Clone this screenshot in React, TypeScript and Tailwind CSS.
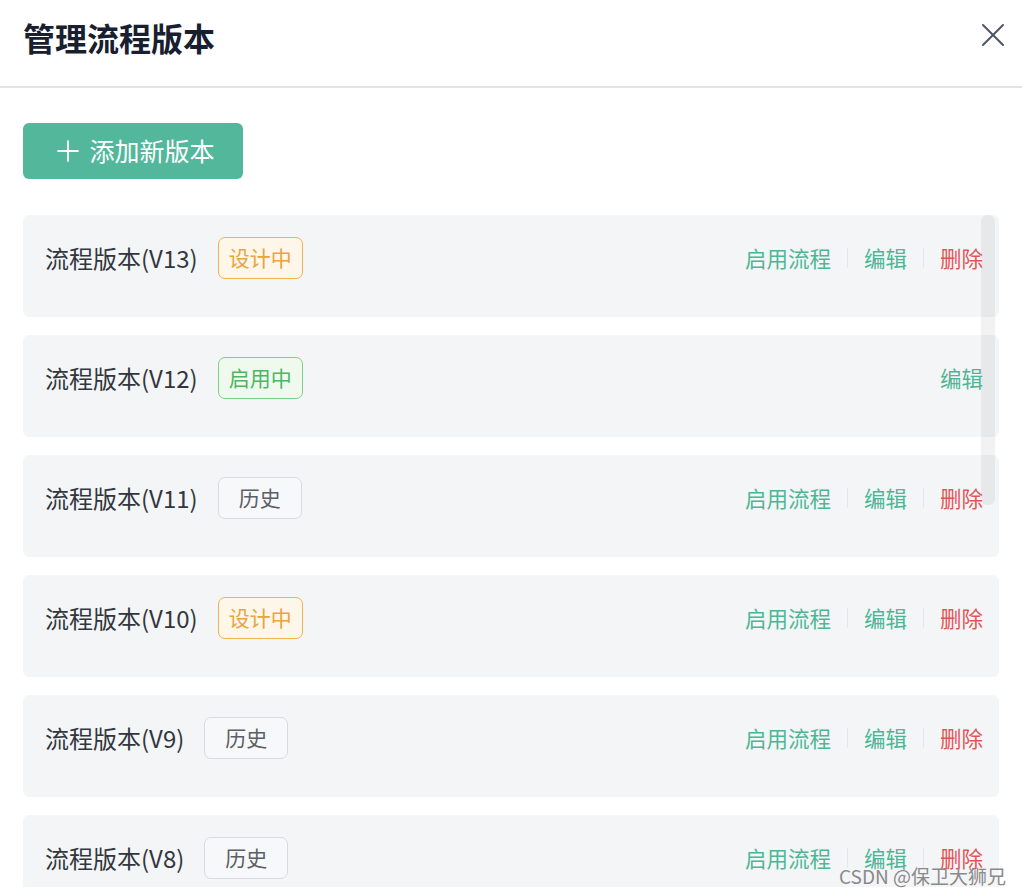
import { X, Plus } from 'lucide-react'

type Status = 'design' | 'active' | 'history'

const versions: { name: string; status: Status }[] = [
  { name: '流程版本(V13)', status: 'design' },
  { name: '流程版本(V12)', status: 'active' },
  { name: '流程版本(V11)', status: 'history' },
  { name: '流程版本(V10)', status: 'design' },
  { name: '流程版本(V9)', status: 'history' },
  { name: '流程版本(V8)', status: 'history' },
]

const badgeStyles: Record<Status, { label: string; cls: string }> = {
  design: { label: '设计中', cls: 'border-[#eeb44e] bg-[#fdf6e9] text-[#e9a43a] px-[10px]' },
  active: { label: '启用中', cls: 'border-[#7dd08a] bg-[#f0f9ee] text-[#4cb763] px-[10px]' },
  history: { label: '历史', cls: 'border-[#d9dbe0] bg-[#f7f8fa] text-[#5c5f66] px-[20px]' },
}

function Divider() {
  return <span className="mx-4 h-[20px] w-px bg-[#e4e6ea]"></span>
}

export default function App() {
  return (
    <div
      className="relative h-[896px] w-[1022px] overflow-hidden bg-white"
      style={{ fontFamily: '"Noto Sans CJK SC", "Noto Sans", sans-serif' }}
    >
      {/* Header */}
      <div className="flex h-[88px] items-start justify-between border-b-2 border-[#e2e3e5] pl-[23px] pr-[9px] pt-[16px]">
        <h1 className="text-[32px] font-bold leading-[42px] text-[#182030]">管理流程版本</h1>
        <button className="-mt-[1px] text-[#4b5563]">
          <X className="h-[40px] w-[40px]" strokeWidth={1.2} />
        </button>
      </div>

      {/* Body */}
      <div className="relative h-[799px] overflow-hidden px-[23px] pt-[35px]">
        <button className="flex h-[56px] w-[220px] items-center justify-center gap-[4px] rounded-md bg-[#53b79b] text-[25px] text-white">
          <Plus className="h-[34px] w-[34px]" strokeWidth={1.3} />
          <span>添加新版本</span>
        </button>

        <div className="mt-[36px] flex flex-col gap-[18px]">
          {versions.map((v) => {
            const badge = badgeStyles[v.status]
            return (
              <div
                key={v.name}
                className="flex h-[102px] shrink-0 items-start justify-between rounded-md bg-[#f4f5f7] pl-[22px] pr-[16px] pt-[22px]"
              >
                <div className="flex items-center gap-[20px]">
                  <span className="text-[24px] text-[#33373d]">{v.name}</span>
                  <span
                    className={`flex h-[42px] items-center rounded-[7px] border text-[21px] ${badge.cls}`}
                  >
                    {badge.label}
                  </span>
                </div>
                <div className="flex h-[42px] items-center text-[21.5px]">
                  {v.status === 'active' ? (
                    <span className="text-[#4cb795]">编辑</span>
                  ) : (
                    <>
                      <span className="text-[#4cb795]">启用流程</span>
                      <Divider />
                      <span className="text-[#4cb795]">编辑</span>
                      <Divider />
                      <span className="text-[#e05555]">删除</span>
                    </>
                  )}
                </div>
              </div>
            )
          })}
        </div>

        {/* scrollbar thumb */}
        <div className="absolute right-[27px] top-[127px] h-[290px] w-[14px] rounded-md bg-black/[0.05]"></div>
      </div>

      {/* watermark */}
      <div className="absolute bottom-[6px] right-[16px] text-[19px] text-[#8a8a8a]">CSDN @保卫大狮兄</div>
    </div>
  )
}
